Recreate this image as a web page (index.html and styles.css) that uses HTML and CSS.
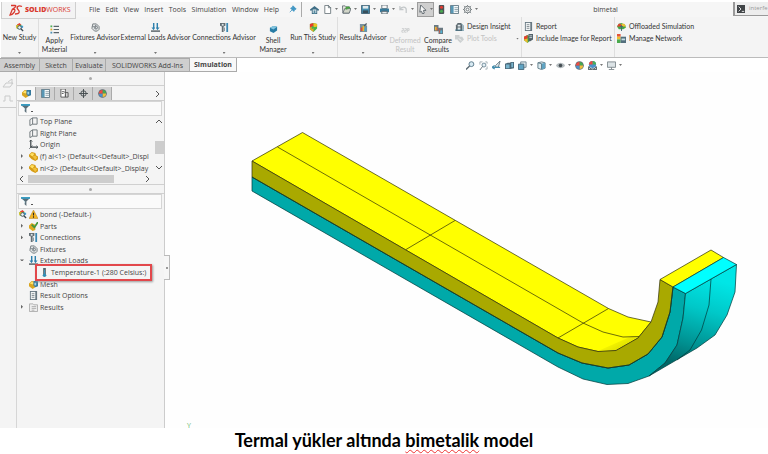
FILE: index.html
```html
<!DOCTYPE html>
<html lang="tr">
<head>
<meta charset="utf-8">
<title>bimetal</title>
<link rel="stylesheet" href="styles.css">
</head>
<body>
<svg class="defs" aria-hidden="true">
  <defs>
    <symbol id="study" viewBox="0 0 10 10"><path d="M1 3 4 1l3 1 1 3-3 2-3-1z" fill="#48b04a"/><path d="M2 2 5 0l2 2-3 1z" fill="#e83b2e"/><path d="M1 3l3-1 1 3-3 1z" fill="#f2c21c"/><path d="M5 3h4v2L7 6z" fill="#3b9bd0"/><circle cx="5" cy="5" r="2" fill="#e8f4f8" stroke="#4a5a62"/><path d="m6.500 6.500 2.500 2.500" stroke="#3c4b54" stroke-width="1.500"/></symbol>
    <symbol id="material" viewBox="0 0 10 10"><path d="M4 1.500h6M4 5h6M4 8.500h6" stroke="#59656b" stroke-width="1.200"/><path d="M.5 1.500h2" stroke="#4dad54" stroke-width="2"/><path d="M.5 5h2" stroke="#dba82b" stroke-width="2"/><path d="M.5 8.500h2" stroke="#4e91b5" stroke-width="2"/></symbol>
    <symbol id="fixture" viewBox="0 0 10 10"><path d="M2 1h4l3 3v3L7 9H4L1 6z" fill="#e1e4e5" stroke="#72797d"/><circle cx="5.500" cy="5" r="1.700" fill="none" stroke="#6c7478"/><path d="M1 4h3M5 2v4" stroke="#838a8e"/></symbol>
    <symbol id="loads" viewBox="0 0 10 10"><path d="M3 0v6M7 0v6" stroke="#2e80ad" stroke-width="1.600"/><path d="M.5 5h4L3 8zM5.500 5h4L7 8z" fill="#2e80ad"/><path d="M0 9h10" stroke="#4b565c" stroke-width="1.500"/></symbol>
    <symbol id="connections" viewBox="0 0 10 10"><path d="M0 0h6v3L4 4v6H2V4L0 3z" fill="#636e74"/><path d="M2 1h2v2H2z" fill="#dce4e8"/><path d="M8 0v10" stroke="#3b89b3" stroke-width="2"/><path d="M5 5v4" stroke="#85929a"/></symbol>
    <symbol id="shell" viewBox="0 0 10 10"><path d="m1 3 4-2 4 1v4L5 9 1 7z" fill="#277ba5"/><path d="m1 3 4-2 4 1-4 3z" fill="#83c5df"/></symbol>
    <symbol id="run" viewBox="0 0 10 10"><path d="m1 1 4-1 4 1v5L5 10 1 7z" fill="#45b449"/><path d="m1 1 4-1v4L1 5z" fill="#e9392b"/><path d="m5 0 4 1v3L5 5z" fill="#f0c323"/><path d="m1 5 4-1v6L1 7z" fill="#eaa826"/><path d="M3 3v4l4-2z" fill="#4daf49"/></symbol>
    <symbol id="results" viewBox="0 0 10 10"><path d="M1 1h5l3 2v7H1z" fill="#77919e"/><path d="M2 5h2v4H2z" fill="#e84434"/><path d="M4 3h2v6H4z" fill="#e9ba2f"/><path d="M6 5h2v4H6z" fill="#46a2cf"/><path d="m5 3 3-3 1 1-3 3z" fill="#4f5b62"/></symbol>
    <symbol id="deformed" viewBox="0 0 10 10"><path d="M1 4h2v2H1v2h2M4 4h2v2H4v2h2M7 8V4h2v2H7" fill="none" stroke="#c9cccd"/></symbol>
    <symbol id="compare" viewBox="0 0 10 10"><path d="M0 0h5v7H0zM5 3h5v7H5z" fill="#687982"/><path d="M1 2h2v4H1z" fill="#ecb63a"/><path d="M3 3h1v3H3z" fill="#e5533a"/><path d="M6 5h1v4H6z" fill="#e5533a"/><path d="M7 6h2v3H7z" fill="#54b3d5"/></symbol>
    <symbol id="insight" viewBox="0 0 10 10"><path d="M1 10V4l2-3h4l1 3v6z" fill="#5f6a70"/><path d="M3 3h3v2H3zM3 6h3v3H3z" fill="#dfe8eb"/><path d="M0 9h10M7 2l2 2v4" fill="none" stroke="#447990"/></symbol>
    <symbol id="plot" viewBox="0 0 10 10"><path d="M0 1h5v5H0zM3 3h5l2 3-4 4-3-3z" fill="#ccd0d1"/><path d="m4 5 3 2" stroke="#f3f3f3"/></symbol>
    <symbol id="report" viewBox="0 0 10 10"><path d="M1 0h8v10H1z" fill="#687882"/><path d="M2 1h5v8H2z" fill="#f2f5f5"/><path d="M3 3h3M3 5h3M3 7h3" stroke="#7f898e"/></symbol>
    <symbol id="repimg" viewBox="0 0 10 10"><path d="M0 3 4 1l3 2v4L4 10 0 7z" fill="#3da946"/><path d="m0 3 4-2v4L0 6z" fill="#e63f2e"/><path d="m0 6 4-1v5L0 7z" fill="#efbb2b"/><path d="M5 0h5v6L7 8H5z" fill="#526169"/><path d="M6 2h3M6 4h3" stroke="#ccd7dc"/></symbol>
    <symbol id="offload" viewBox="0 0 10 10"><path d="m0 5 2-3 3-1 4 2 1 3-3 2H2z" fill="#46ab49"/><path d="m0 5 2-3h2l1 3z" fill="#e34031"/><path d="M5 2h3l2 3H5z" fill="#f0bf2d"/><path d="M5 4v6M3 6l2-2 2 2" fill="none" stroke="#426170"/></symbol>
    <symbol id="network" viewBox="0 0 10 10"><path d="M0 0h4v3H0z" fill="#e55338"/><path d="M0 3h4v3H0z" fill="#eebe31"/><path d="M0 6h4v4H0z" fill="#4aaa4d"/><path d="M4 3h6v7H4z" fill="#536f7d"/><path d="M5 5h4v2H5z" fill="#c7dce5"/></symbol>
    <symbol id="pin" viewBox="0 0 10 10"><path d="m5 1 4 4-2 1-1 2-4-4 2-1zM4 6 1 9" fill="#4297c4" stroke="#4297c4"/></symbol>
    <symbol id="home" viewBox="0 0 10 10"><path d="m0 5 5-4 5 4v1H8v4H2V6H0z" fill="#3f6e86"/><path d="M3 5h4v4H3z" fill="#e3ecef"/><path d="M4 6h2v4H4z" fill="#55899f"/></symbol>
    <symbol id="new" viewBox="0 0 10 10"><path d="M2 .5h4l2.500 2.500v6.500H2z" fill="#fff" stroke="#6f7a80"/><path d="M6 0v3h3" fill="none" stroke="#6f7a80"/></symbol>
    <symbol id="open" viewBox="0 0 10 10"><path d="M.5 1h3l1 1H8v7H1z" fill="#e7e8df" stroke="#667177"/><path d="m1 9 2-5h7L8 9z" fill="#d2d6c9" stroke="#667177"/><path d="M5 5V3l4 0" fill="none" stroke="#4aa341" stroke-width="2"/></symbol>
    <symbol id="save" viewBox="0 0 10 10"><path d="M.5.5h9v9h-9z" fill="#448eb0" stroke="#446275"/><path d="M2 1h6v3H2z" fill="#e1eaed"/><path d="M2 6h6v3H2z" fill="#384f5b"/></symbol>
    <symbol id="print" viewBox="0 0 10 10"><path d="M2 0h6v4H2z" fill="#f7f7f7" stroke="#62717a"/><path d="M0 4h10v4H0z" fill="#387b9b"/><path d="M2 7h6v3H2z" fill="#e7ecee" stroke="#53626a"/></symbol>
    <symbol id="undo" viewBox="0 0 10 10"><path d="M1 1v4h4M1 5c2-4 7-3 7 0v4" fill="none" stroke="#c3c7c9" stroke-width="1.400"/></symbol>
    <symbol id="cursor" viewBox="0 0 10 10"><path d="m3 0 6 6H6l1 3-2 1-1-3-2 1z" fill="#f7f7f7" stroke="#59636a"/></symbol>
    <symbol id="traffic" viewBox="0 0 10 10"><rect x="2" width="6" height="10" rx="1" fill="#4b5356"/><circle cx="5" cy="2.500" r="1.700" fill="#e53b30"/><circle cx="5" cy="7" r="1.700" fill="#48a951"/></symbol>
    <symbol id="props" viewBox="0 0 10 10"><path d="M.5.5h9v9h-9z" fill="#f6fafb" stroke="#5a7481"/><path d="M1 1h3v8H1z" fill="#5796b4"/><path d="M5 3h4M5 5h4M5 7h4" stroke="#8da0aa"/></symbol>
    <symbol id="gear" viewBox="0 0 10 10"><circle cx="5" cy="5" r="3.700" fill="#e7e9e9" stroke="#71787c"/><circle cx="5" cy="5" r="1.500" fill="#fff" stroke="#71787c"/><path d="M5 0v1M5 9v1M0 5h1M9 5h1M1 1l1 1M8 8l1 1M1 9l1-1M8 2l1-1" stroke="#71787c"/></symbol>
    <symbol id="console" viewBox="0 0 10 10"><path d="M0 0h10v10H0z" fill="#404447"/><path d="m2 2 3 3-3 3M6 8h3" fill="none" stroke="#fff"/></symbol>
    <symbol id="zoomfit" viewBox="0 0 10 10"><circle cx="6" cy="3.500" r="2.700" fill="#d8eaf3" stroke="#557486"/><path d="M4 5.500 0 9.500" stroke="#5c6a72" stroke-width="1.500"/></symbol>
    <symbol id="zoomarea" viewBox="0 0 10 10"><path d="M1 1h3M1 1v3M7 1h2v2M9 6v3H7" fill="none" stroke="#9fabb1"/><circle cx="5.500" cy="4.500" r="2.200" fill="#e4eff4" stroke="#6b8796"/><path d="m4 6-3 4" stroke="#5c6a72"/></symbol>
    <symbol id="prev" viewBox="0 0 10 10"><path d="m9 0-5 5v2h3z" fill="#dae7ec" stroke="#66767e"/><path d="M3 5 0 7l3 2M1 7h8" fill="none" stroke="#458eae" stroke-width="1.300"/></symbol>
    <symbol id="section" viewBox="0 0 10 10"><path d="m0 3 3-1h3v7H0zM6 1h4v7L6 9z" fill="#4b6878"/><path d="M1 4h4v4H1zM7 2h2v5H7z" fill="#79b4cd"/></symbol>
    <symbol id="orient" viewBox="0 0 10 10"><path d="M3 1h6v6H3z" fill="#dfe9ed" stroke="#6f8590"/><path d="M.5 3.500h6v6h-6z" fill="#5fa3c2" stroke="#456779"/></symbol>
    <symbol id="cube" viewBox="0 0 10 10"><path d="M1 2 5 1l4 1v6L5 9.500 1 8z" fill="#dcebf0" stroke="#5d7986"/><path d="m5 3 4-1v6L5 9.500z" fill="#5fa3c2"/><path d="m1 2 4 1v6" fill="none" stroke="#5d7986"/></symbol>
    <symbol id="eye" viewBox="0 0 10 10"><path d="M0 5c2-4 8-4 10 0-2 4-8 4-10 0" fill="#b6bdc0"/><circle cx="5" cy="5" r="2" fill="#454e53"/></symbol>
    <symbol id="ball" viewBox="0 0 10 10"><circle cx="5" cy="5" r="4.800" fill="#626c72"/><path d="M5 5V1a4 4 0 0 1 4 4z" fill="#45a952"/><path d="M5 5h4a4 4 0 0 1-4 4z" fill="#f2bf3c"/><path d="M5 5v4a4 4 0 0 1-4-4z" fill="#4b91cc"/><path d="M5 5H1a4 4 0 0 1 4-4z" fill="#ed4b43"/></symbol>
    <symbol id="scene" viewBox="0 0 10 10"><path d="M0 6h10v4H0z" fill="#626d73"/><circle cx="5" cy="4" r="4" fill="#4b91cc"/><path d="M5 4V0a4 4 0 0 1 4 4z" fill="#4bae58"/><path d="M5 4H1a4 4 0 0 1 4-4z" fill="#ed4b43"/><path d="m1 9 2-2 2 2 2-2 2 2" fill="none" stroke="#d3dbde"/></symbol>
    <symbol id="screen" viewBox="0 0 10 10"><path d="M.5 1h9v6h-9z" fill="#dce3e6" stroke="#7b858a"/><path d="M5 7v2M2 9.500h6" stroke="#7b858a"/></symbol>
    <symbol id="part" viewBox="0 0 10 10"><path d="m0 3 3-3 4 1 1 3 2 1v3L7 10 3 8 0 5z" fill="#d59c17"/><path d="m1 3 2-2 3 1-2 3z" fill="#ffe264"/><path d="m4 5 3-1 2 2-2 3z" fill="#f2c13a"/></symbol>
    <symbol id="assembly" viewBox="0 0 10 10"><path d="m0 4 3-3 4 1v6L4 10 0 7z" fill="#d9a51f"/><path d="m1 4 2-2 3 1-2 2z" fill="#ffe36b"/><path d="M5 1h5v6L7 8 5 6z" fill="#36799c"/><path d="M6 3h2v3H6z" fill="#a4d4e6"/></symbol>
    <symbol id="partsok" viewBox="0 0 10 10"><path d="m0 4 3-3 4 2v6L4 10 0 7z" fill="#dda821"/><path d="m3 3 3 3 4-6" fill="none" stroke="#42973c" stroke-width="2"/></symbol>
    <symbol id="config" viewBox="0 0 10 10"><path d="M1 0h5v9H1z" fill="#fff" stroke="#555"/><path d="M2 3h3M2 5h2M5 4h4v5H6V6" fill="none" stroke="#555"/></symbol>
    <symbol id="target" viewBox="0 0 10 10"><circle cx="5" cy="5" r="3" fill="none" stroke="#3f474b"/><path d="M5 0v10M0 5h10" stroke="#3f474b"/></symbol>
    <symbol id="filter" viewBox="0 0 10 10"><path d="M0 1h10L6 5v5L4 8V5z" fill="#5b6e78"/><path d="M0 0h10v2H0z" fill="#3a9dc2"/><path d="m2 3 2 2v2" fill="none" stroke="#d8edf4"/></symbol>
    <symbol id="plane" viewBox="0 0 10 10"><path d="m1 3 3-2v7L1 9.500zM4 1h5v7H4" fill="none" stroke="#687075"/></symbol>
    <symbol id="origin" viewBox="0 0 10 10"><path d="M2 0v8h8" fill="none" stroke="#333c40" stroke-width="1.300"/><path d="m0 2 2-2 2 2M8 6l2 2-2 2M0 10l4-4" fill="none" stroke="#333c40" stroke-width=".6"/></symbol>
    <symbol id="warn" viewBox="0 0 10 10"><path d="m5 0 5 9.500H0z" fill="#f5b625" stroke="#a97916" stroke-width=".5"/><path d="M5 3v3M5 7v1.500" stroke="#262626" stroke-width="1.200"/></symbol>
    <symbol id="thermo" viewBox="0 0 10 10"><path d="M5 0v7" stroke="#53636c" stroke-width="3"/><path d="M5 2v6" stroke="#3a9bc4"/><circle cx="5" cy="8" r="2" fill="#328cb4"/></symbol>
    <symbol id="folder" viewBox="0 0 10 10"><path d="M.5 1h4l1 1h4v7.500h-9z" fill="#eee" stroke="#aaa"/><path d="M3 4h5M3 6h5M3 8h3" stroke="#aaa"/></symbol>
  </defs>
</svg>

<header class="menubar">
  <div class="brand">
    <svg class="brand-mark" viewBox="0 0 14 12" aria-hidden="true"><path d="M2 1.500h4c2 0 0 2.500-2.500 3.500M3.500 5c3 0 3 1.500 1.500 3.500S2 11 1 11l2.500-6M13 2.500C9 .5 7 3.500 9 5.500s2 4.500-3 4.500" fill="none" stroke="#d9392f" stroke-width="1.300"/></svg>
    <span class="brand-name"><b>SOLID</b>WORKS</span>
  </div>
  <nav class="menus">
    <button>File</button><button>Edit</button><button>View</button><button>Insert</button><button>Tools</button><button>Simulation</button><button>Window</button><button>Help</button>
  </nav>
  <button class="pin" aria-label="Pin"><svg class="ic small"><use href="#pin"/></svg></button>
  <div class="quick">
    <button aria-label="Home"><svg class="ic"><use href="#home"/></svg></button>
    <button class="drop" aria-label="New"><svg class="ic"><use href="#new"/></svg></button>
    <button class="drop" aria-label="Open"><svg class="ic"><use href="#open"/></svg></button>
    <button class="drop" aria-label="Save"><svg class="ic"><use href="#save"/></svg></button>
    <button class="drop" aria-label="Print"><svg class="ic"><use href="#print"/></svg></button>
    <button class="drop" aria-label="Undo"><svg class="ic"><use href="#undo"/></svg></button>
    <button class="drop pressed" aria-label="Select"><svg class="ic"><use href="#cursor"/></svg></button>
    <button aria-label="Rebuild"><svg class="ic"><use href="#traffic"/></svg></button>
    <button aria-label="Properties"><svg class="ic"><use href="#props"/></svg></button>
    <button class="drop" aria-label="Options"><svg class="ic"><use href="#gear"/></svg></button>
  </div>
  <div class="doc-title">bimetal</div>
  <button class="search"><svg class="ic small"><use href="#console"/></svg><span>interfe</span></button>
</header>

<div class="ribbon">
  <button class="tool more line"><svg class="ic"><use href="#study"/></svg><span>New Study</span></button>
  <button class="tool tall"><svg class="ic"><use href="#material"/></svg><span>Apply<br>Material</span></button>
  <button class="tool more"><svg class="ic"><use href="#fixture"/></svg><span>Fixtures Advisor</span></button>
  <button class="tool more"><svg class="ic"><use href="#loads"/></svg><span>External Loads Advisor</span></button>
  <button class="tool more"><svg class="ic"><use href="#connections"/></svg><span>Connections Advisor</span></button>
  <button class="tool tall"><svg class="ic"><use href="#shell"/></svg><span>Shell<br>Manager</span></button>
  <button class="tool more line"><svg class="ic"><use href="#run"/></svg><span>Run This Study</span></button>
  <button class="tool more"><svg class="ic"><use href="#results"/></svg><span>Results Advisor</span></button>
  <button class="tool tall" disabled><svg class="ic"><use href="#deformed"/></svg><span>Deformed<br>Result</span></button>
  <button class="tool tall"><svg class="ic"><use href="#compare"/></svg><span>Compare<br>Results</span></button>
  <div class="stack line">
    <button><svg class="ic"><use href="#insight"/></svg>Design Insight</button>
    <button class="drop end" disabled><svg class="ic"><use href="#plot"/></svg>Plot Tools</button>
  </div>
  <div class="stack line">
    <button><svg class="ic"><use href="#report"/></svg>Report</button>
    <button><svg class="ic"><use href="#repimg"/></svg>Include Image for Report</button>
  </div>
  <div class="stack">
    <button><svg class="ic"><use href="#offload"/></svg>Offloaded Simulation</button>
    <button><svg class="ic"><use href="#network"/></svg>Manage Network</button>
  </div>
</div>

<div class="tabrow">
  <nav class="tabs">
    <button>Assembly</button><button>Sketch</button><button>Evaluate</button><button>SOLIDWORKS Add-Ins</button><button class="active">Simulation</button>
  </nav>
  <div class="viewbar">
    <button aria-label="Zoom to fit"><svg class="ic"><use href="#zoomfit"/></svg></button>
    <button aria-label="Zoom to area"><svg class="ic"><use href="#zoomarea"/></svg></button>
    <button aria-label="Previous view"><svg class="ic"><use href="#prev"/></svg></button>
    <button aria-label="Section view"><svg class="ic"><use href="#section"/></svg></button>
    <button class="drop" aria-label="View orientation"><svg class="ic"><use href="#orient"/></svg></button>
    <button class="drop" aria-label="Display style"><svg class="ic"><use href="#cube"/></svg></button>
    <button class="drop" aria-label="Hide or show items"><svg class="ic"><use href="#eye"/></svg></button>
    <button aria-label="Edit appearance"><svg class="ic"><use href="#ball"/></svg></button>
    <button class="drop" aria-label="Apply scene"><svg class="ic"><use href="#scene"/></svg></button>
    <button class="drop" aria-label="View settings"><svg class="ic"><use href="#screen"/></svg></button>
  </div>
</div>

<main class="work">
  <aside class="side">
    <div class="strip">
      <svg class="strip-icons" viewBox="0 0 14 26" aria-hidden="true"><path d="m2 9 3-4h7L9 9zM7 4l4-3v5M2 23h2v-5h5v5h3" fill="none" stroke="#c9caca"/></svg>
    </div>
    <section class="panel">
      <div class="grip"></div>
      <div class="ptabs">
        <button class="on" aria-label="Feature tree"><svg class="ic"><use href="#assembly"/></svg></button>
        <button aria-label="Properties"><svg class="ic"><use href="#props"/></svg></button>
        <button aria-label="Configurations"><svg class="ic"><use href="#config"/></svg></button>
        <button aria-label="Dimensions"><svg class="ic"><use href="#target"/></svg></button>
        <button aria-label="Appearances"><svg class="ic"><use href="#ball"/></svg></button>
        <svg class="chev" viewBox="0 0 6 6"><path d="m1 0 3 3-3 3"/></svg>
      </div>
      <label class="filter"><svg class="ic"><use href="#filter"/></svg><input aria-label="Filter features"></label>
      <div class="scroller">
        <ul class="tree top">
          <li><i></i><svg class="ic"><use href="#plane"/></svg><span>Top Plane</span></li>
          <li><i></i><svg class="ic"><use href="#plane"/></svg><span>Right Plane</span></li>
          <li><i></i><svg class="ic"><use href="#origin"/></svg><span>Origin</span></li>
          <li><i class="closed"></i><svg class="ic"><use href="#part"/></svg><span>(f) al&lt;1&gt; (Default&lt;&lt;Default&gt;_Displ</span></li>
          <li><i class="closed"></i><svg class="ic"><use href="#part"/></svg><span>ni&lt;2&gt; (Default&lt;&lt;Default&gt;_Display</span></li>
        </ul>
        <div class="vbar">
          <svg class="chev" viewBox="0 0 6 6"><path d="m0 4 3-3 3 3"/></svg><b></b><svg class="chev" viewBox="0 0 6 6"><path d="m0 1 3 3 3-3"/></svg>
        </div>
      </div>
      <div class="hbar">
        <svg class="chev" viewBox="0 0 6 6"><path d="M4 0 1 3l3 3"/></svg><b></b><svg class="chev" viewBox="0 0 6 6"><path d="m1 0 3 3-3 3"/></svg>
      </div>
      <div class="grip ruled"></div>
      <label class="filter"><svg class="ic"><use href="#filter"/></svg><input aria-label="Filter study"></label>
      <ul class="tree study">
        <li><svg class="ic lead"><use href="#study"/></svg><svg class="ic"><use href="#warn"/></svg><span>bond (-Default-)</span></li>
        <li><i class="closed"></i><svg class="ic"><use href="#partsok"/></svg><span>Parts</span></li>
        <li><i class="closed"></i><svg class="ic"><use href="#connections"/></svg><span>Connections</span></li>
        <li><i></i><svg class="ic"><use href="#fixture"/></svg><span>Fixtures</span></li>
        <li><i class="opened"></i><svg class="ic"><use href="#loads"/></svg><span>External Loads</span></li>
        <li class="child"><svg class="ic"><use href="#thermo"/></svg><span>Temperature-1 (:280 Celsius:)</span></li>
        <li><i></i><svg class="ic"><use href="#assembly"/></svg><span>Mesh</span></li>
        <li><i></i><svg class="ic"><use href="#report"/></svg><span>Result Options</span></li>
        <li><i class="closed"></i><svg class="ic"><use href="#folder"/></svg><span>Results</span></li>
      </ul>
    </section>
    <div class="handle"></div>
  </aside>
  <section class="viewport">
    <svg class="model" viewBox="165 72 603 356" role="img" aria-label="bimetal">
      <defs>
        <linearGradient id="bend" gradientUnits="userSpaceOnUse" x1="710" y1="278" x2="684" y2="366"><stop offset="0" stop-color="#00e6e6"/><stop offset=".35" stop-color="#00c8c8"/><stop offset=".75" stop-color="#009191"/><stop offset="1" stop-color="#006868"/></linearGradient>
        <linearGradient id="dip" gradientUnits="userSpaceOnUse" x1="618" y1="335" x2="626" y2="350"><stop offset="0" stop-color="#ff0"/><stop offset="1" stop-color="#d8d800"/></linearGradient>
      </defs>
      <g stroke="#34340a" stroke-width=".9" stroke-opacity=".8" stroke-linejoin="round">
        <path fill="#ff0" d="M252 161 302.500 132.500 608.500 308.500 628 317 651 322 638 338 616 350.500 598 351.500 578 347 558 338z"/>
        <path fill="url(#dip)" stroke="none" d="m598 351 34-15 6 1-22 13z"/>
        <path fill="#00a9a9" stroke="#003c3c" d="M252 177 558 353 582 363 608 368 629 365 648 354 662 337 670 312 673 287 685.500 293.500 683 318 677 345 665 363 649 376 628 383.500 607 384.500 583 379 558 367 252 191z"/>
        <path fill="#a9a900" d="M252 161 558 338 578 347 598 351.500 616 350.500 638 338 651 322 658 302 660 279.500 673 287 670 312 662 337 648 354 629 365 608 368 582 363 558 353 252 177z"/>
        <path fill="url(#bend)" stroke="#003c3c" d="m685.500 293.500 51-29-1.500 27.500-8 23-12 20-18 13-48 28 16-13 12-18 6-27z"/>
        <path fill="#ff0" d="m660 279.500 51-29.500 12.500 7.500L673 287z"/>
        <path fill="#0ff" stroke="#003c3c" d="m673 287 50.500-29.500 13 7-51 29z"/>
        <path fill="none" d="m277.500 147 305.500 176 20 9 20 5 16-.5M455 220.500l-49 29M608.500 308.500 558 338"/>
        <path fill="none" stroke="#003c3c" d="m711 279-2 26-7.500 25-11.500 20-13 10M252 177 558 353 582 363 608 368 629 365 648 354 662 337 670 312 673 287"/>
      </g>
    </svg>
    <span class="axis">Y</span>
  </section>
</main>

<footer class="caption">Termal yükler altında <span class="misspelt">bimetalik</span> model</footer>
</body>
</html>
```
FILE: styles.css
```css
*, *::before, *::after { box-sizing: border-box; }
body {
  margin: 0;
  min-height: 100vh;
  display: flex;
  flex-direction: column;
  background: #fff;
  color: #444;
  font: 7px/9px "Open Sans", "Noto Sans", sans-serif;
  overflow: hidden;
}
button {
  margin: 0;
  padding: 0;
  border: 0;
  background: none;
  color: inherit;
  font: inherit;
  white-space: nowrap;
}
button:disabled { color: #c2c2c2; }
.defs { position: absolute; width: 0; height: 0; }
.ic { display: block; flex: none; width: 9px; height: 9px; }
.ic.small { width: 8px; height: 8px; }
.chev { width: 6px; height: 6px; fill: none; stroke: #555; overflow: visible; }
.drop { display: flex; align-items: center; gap: 3px; }
.drop::after {
  content: "";
  width: 3px;
  height: 2px;
  background: #777;
  clip-path: polygon(0 0, 100% 0, 50% 100%);
}

/* Menu bar */
.menubar {
  display: flex;
  height: 17px;
  margin-top: 2px;
  margin-left: 1px;
  background: #f6f6f6;
  border-bottom: 1px solid #bdbdbd;
  margin-bottom: -2px;
  align-items: center;
  padding-bottom: 2px;
}
.brand {
  display: flex;
  align-items: center;
  gap: 2px;
  align-self: flex-start;
  flex: none;
  width: 75px;
  height: 17px;
  padding-left: 7px;
  background: #f3f3f3;
  border: 1px solid #cfcfcf;
  border-top: 0;
  z-index: 1;
}
.brand-mark { flex: none; width: 14px; height: 12px; }
.brand-name { color: #d9392f; font: 7px/10px "Open Sans", sans-serif; }
.brand-name b { font-weight: 800; }
.menus { display: flex; justify-content: space-between; width: 190px; margin-left: 13px; flex: none; }
.pin { margin-left: 10px; padding-right: 4px; }
.quick { display: flex; align-items: center; gap: 4px; flex: none; border-left: 1px solid #aaa; padding-left: 8px; height: 15px; }
.quick .pressed { background: #cfcfcf; outline: 1px solid #9d9d9d; height: 13px; }
.doc-title { flex: 1; text-align: center; }
.search {
  display: flex;
  align-items: center;
  gap: 4px;
  width: 35px;
  height: 14px;
  padding-left: 2px;
  color: #999;
  font-size: 6px;
  background: #ededed;
  border: 1px solid #999;
  border-width: 0 0 1px 2px;
}

/* Command ribbon */
.ribbon {
  display: grid;
  grid-template-columns: 38px 31px 50px 71px 66px 32px 49px 50px 34px 32px 68px 93px 1fr;
  height: 41px;
  margin-left: 1px;
  background: #f4f4f4;
  border-bottom: 1px solid #bbb;
  color: #333;
  font-family: Lato, "Open Sans", sans-serif;
}
.line { border-right: 1px solid #dedede; }
.tool {
  display: flex;
  flex-direction: column;
  align-items: center;
  padding-top: 6px;
  gap: 1px;
}
.tool.tall { padding-top: 8px; gap: 2px; }
.tool.more::after {
  content: "";
  width: 3px;
  height: 2px;
  margin-top: 9px;
  background: #777;
  clip-path: polygon(0 0, 100% 0, 50% 100%);
}
.stack { display: flex; flex-direction: column; gap: 3px; padding: 5px 2px 0 1px; }
.stack button { display: flex; align-items: center; gap: 3px; }
.stack .end::after { margin-left: auto; }
.stack + .stack { padding-left: 2px; }

/* Document tabs and view toolbar */
.tabrow { display: flex; height: 14px; }
.tabs { display: grid; grid-template-columns: 40px 33px 33px 84px 47px; flex: none; }
.tabs button { background: #cfcfcf; border: 1px solid #aaa; border-left-width: 0; }
.tabs .active { background: #f8f8f8; border-top: 0; font-weight: 700; }
.viewbar { display: flex; align-items: center; gap: 4px; margin-left: 229px; }

/* Side panel */
.work { flex: 1; display: flex; }
.side { position: relative; display: flex; flex: none; width: 165px; background: #f4f4f4; border-right: 1px solid #ccc; }
.strip { width: 16px; height: 36px; border-bottom: 1px solid #ccc; padding: 6px 1px; }
.strip-icons { width: 14px; height: 26px; }
.panel { flex: 1; min-width: 0; border-left: 1px solid #d6d6d6; }
.grip { height: 14px; display: grid; place-items: center; border-bottom: 1px solid #d0d0d0; }
.grip::after { content: ""; width: 3px; height: 3px; border-radius: 50%; background: #aaa; }
.grip.ruled { height: 10px; border-top: 1px solid #d0d0d0; }
.ptabs { display: flex; align-items: center; height: 15px; padding-top: 1px; border-bottom: 1px solid #ccc; }
.ptabs button { display: grid; place-items: center; width: 19px; height: 13px; background: #d2d2d2; border-right: 1px solid #aaa; }
.ptabs .on { background: #f8f8f8; }
.ptabs .chev { margin-left: auto; margin-right: 3px; }
.filter { display: flex; align-items: center; height: 15px; margin: 0 2px 0 1px; padding-left: 2px; background: #fafafa; border: 1px solid #d5d5d5; }
.filter::after { content: ""; order: 1; width: 2px; height: 1px; background: #555; margin: 5px 1px 0; }
.filter input { order: 2; flex: 1; min-width: 0; height: 11px; padding: 0; border: 0; background: none; font: inherit; outline: 0; }
.scroller { display: flex; height: 58px; }
.tree { display: grid; grid-auto-rows: 1fr; flex: 1; min-width: 0; margin: 0; padding: 0 0 0 3px; list-style: none; }
.tree li { display: flex; align-items: center; gap: 2px; white-space: nowrap; min-height: 0; }
.tree i { width: 7px; height: 5px; flex: none; }
.tree i::after { content: ""; display: block; width: 2px; height: 4px; margin: 0 1px; background: #666; clip-path: polygon(0 0, 100% 50%, 0 100%); }
.tree i:not(.closed)::after { display: none; }
.tree i.opened::after { display: block; width: 4px; height: 2px; margin: 1px 0; clip-path: polygon(0 0, 100% 0, 50% 100%); }
.tree .lead { margin: 0 0 0 -2px; }
.vbar { display: flex; flex-direction: column; align-items: center; width: 10px; padding: 3px 0; }
.vbar b { width: 9px; height: 13px; margin: 16px 0 auto; background: #cdcdcd; }
.hbar { display: flex; align-items: center; height: 10px; padding: 0 13px 0 2px; }
.hbar b { width: 86px; height: 8px; margin: 0 auto 0 3px; background: #cdcdcd; }
.study { height: 104px; }
.tree .child { align-self: center; height: 17px; margin: -3px 12px -3px 15px; padding-left: 3px; border: 2px solid #e2474b; box-shadow: 1px 1px 2px #999; z-index: 1; }
.handle { position: absolute; left: 164px; top: 183px; width: 6px; height: 25px; display: grid; place-items: center; background: #f6f6f6; border: 1px solid #bbb; border-left: 0; z-index: 1; }
.handle::after { content: ""; width: 2px; height: 2px; background: #999; }

/* Graphics area */
.viewport { position: relative; flex: 1; min-width: 0; background: #fefefe; }
.model { display: block; width: 100%; height: auto; }
.axis { position: absolute; left: 22px; bottom: -2px; color: #6dbb72; }

.caption { height: 26px; text-align: center; color: #000; font: 700 18px/24px Lato, sans-serif; }
.misspelt { text-decoration: underline wavy #e33 1px; text-underline-offset: 2px; text-decoration-skip-ink: none; }
```
